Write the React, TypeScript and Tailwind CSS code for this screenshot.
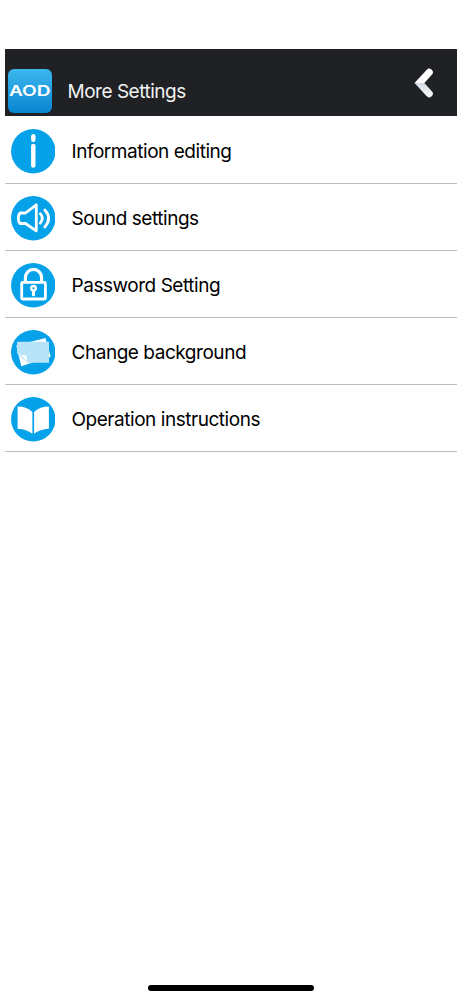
import type { ReactNode } from 'react';

interface SettingsRow {
  label: string;
  icon: ReactNode;
}

function InfoIcon() {
  return (
    <g fill="white">
      <rect x="20.1" y="5" width="4.4" height="8" rx="2.2" />
      <rect x="20.1" y="14.8" width="4.4" height="24" rx="2.2" />
    </g>
  );
}

function SoundIcon() {
  return (
    <g
      fill="none"
      stroke="white"
      strokeWidth="2.8"
      strokeLinecap="round"
      strokeLinejoin="round"
    >
      <path d="M9 17H14.5L25.3 8.8V34.8L14.5 27.5H9Q7.3 25.5 7.3 22.3T9 17Z" />
      <path d="M29.3 17.7Q33.3 22.3 29.3 27.2" />
      <path d="M33.8 14Q41.5 22.3 33.8 31" />
    </g>
  );
}

function LockIcon() {
  return (
    <g fill="none" stroke="white">
      <path d="M14.4 19V14.5A8.1 8.1 0 0 1 30.6 14.5V19" strokeWidth="3.2" />
      <rect x="10.7" y="19.4" width="23.7" height="16.6" rx="1" strokeWidth="2.8" />
      <circle cx="22.5" cy="25.3" r="2.3" strokeWidth="2.3" />
      <path d="M22.5 28V31.8" strokeWidth="3" strokeLinecap="round" />
    </g>
  );
}

function PhotosIcon() {
  return (
    <g>
      <path d="M5.3 15.5L34.5 8L39.7 26.7L10.3 36.3Z" fill="white" />
      <path d="M6.2 11.7H38V32.7H16L6.2 23.5Z" fill="#b9e3f8" />
      <path d="M7.5 24Q13 26.5 16 32.7L15.5 25.5Q12 26 7.5 24Z" fill="white" />
    </g>
  );
}

function BookIcon() {
  return (
    <g fill="white">
      <path d="M6.6 9.6Q15.5 9.6 21.4 15V36.8Q15.5 32.3 6.6 31.8Z" />
      <path d="M37.9 9.6Q29 9.6 23.1 15V36.8Q29 32.3 37.9 31.8Z" />
    </g>
  );
}

const rows: SettingsRow[] = [
  { label: 'Information editing', icon: <InfoIcon /> },
  { label: 'Sound settings', icon: <SoundIcon /> },
  { label: 'Password Setting', icon: <LockIcon /> },
  { label: 'Change background', icon: <PhotosIcon /> },
  { label: 'Operation instructions', icon: <BookIcon /> },
];

/** Brand tile shown at the left of the header. */
function Logo() {
  return (
    <div className="flex h-[44px] w-[44px] items-center justify-center rounded-[6px] bg-gradient-to-b from-[#3bb8ee] to-[#0585d2] pt-px">
      <span className="scale-x-[1.32] font-['Inter',sans-serif] text-[14.5px] leading-none font-semibold text-white">
        AOD
      </span>
    </div>
  );
}

function Header() {
  return (
    <header className="flex h-[67px] items-end bg-[#202124] pb-[3px] pl-[3px]">
      <Logo />
      <h1 className="ml-[15.5px] pb-[6px] text-[19px] leading-[30px] tracking-[-0.48px] text-[#f2f2f2]">
        More Settings
      </h1>
      <button aria-label="Back" className="mr-[23px] mb-[15px] ml-auto">
        <svg width="20" height="30" viewBox="0 0 20 30" className="block">
          <defs>
            <linearGradient id="chevron" gradientUnits="userSpaceOnUse" x1="0" y1="0" x2="0" y2="30">
              <stop offset="0.5" stopColor="white" />
              <stop offset="0.5" stopColor="#d5dce6" />
              <stop offset="0.9" stopColor="#f3f5f8" />
            </linearGradient>
          </defs>
          <path
            d="M15.2 4.4L5.4 15L15.2 25.6"
            fill="none"
            stroke="url(#chevron)"
            strokeWidth="7.2"
            strokeLinecap="round"
          />
        </svg>
      </button>
    </header>
  );
}

export default function App() {
  return (
    <div className="flex h-[1000px] w-[462px] flex-col bg-white px-[5px] pt-[49px] font-['Inter',sans-serif]">
      <Header />
      <ul className="mt-px">
        {rows.map((row) => (
          <li
            key={row.label}
            className="flex h-[67px] items-center border-b border-[#bdbdbd] pt-[2.5px] pl-[5.5px]"
          >
            <svg width="44.5" height="44.5" viewBox="0 0 44.5 44.5">
              <circle cx="22.25" cy="22.25" r="22.2" fill="#05a2e9" />
              {row.icon}
            </svg>
            <span className="ml-[16.5px] pt-[1.5px] text-[19px] tracking-[-0.46px] text-black">
              {row.label}
            </span>
          </li>
        ))}
      </ul>
      <div className="mt-auto mb-[9px] h-[6px] w-[166px] self-center rounded-full bg-black" />
    </div>
  );
}
